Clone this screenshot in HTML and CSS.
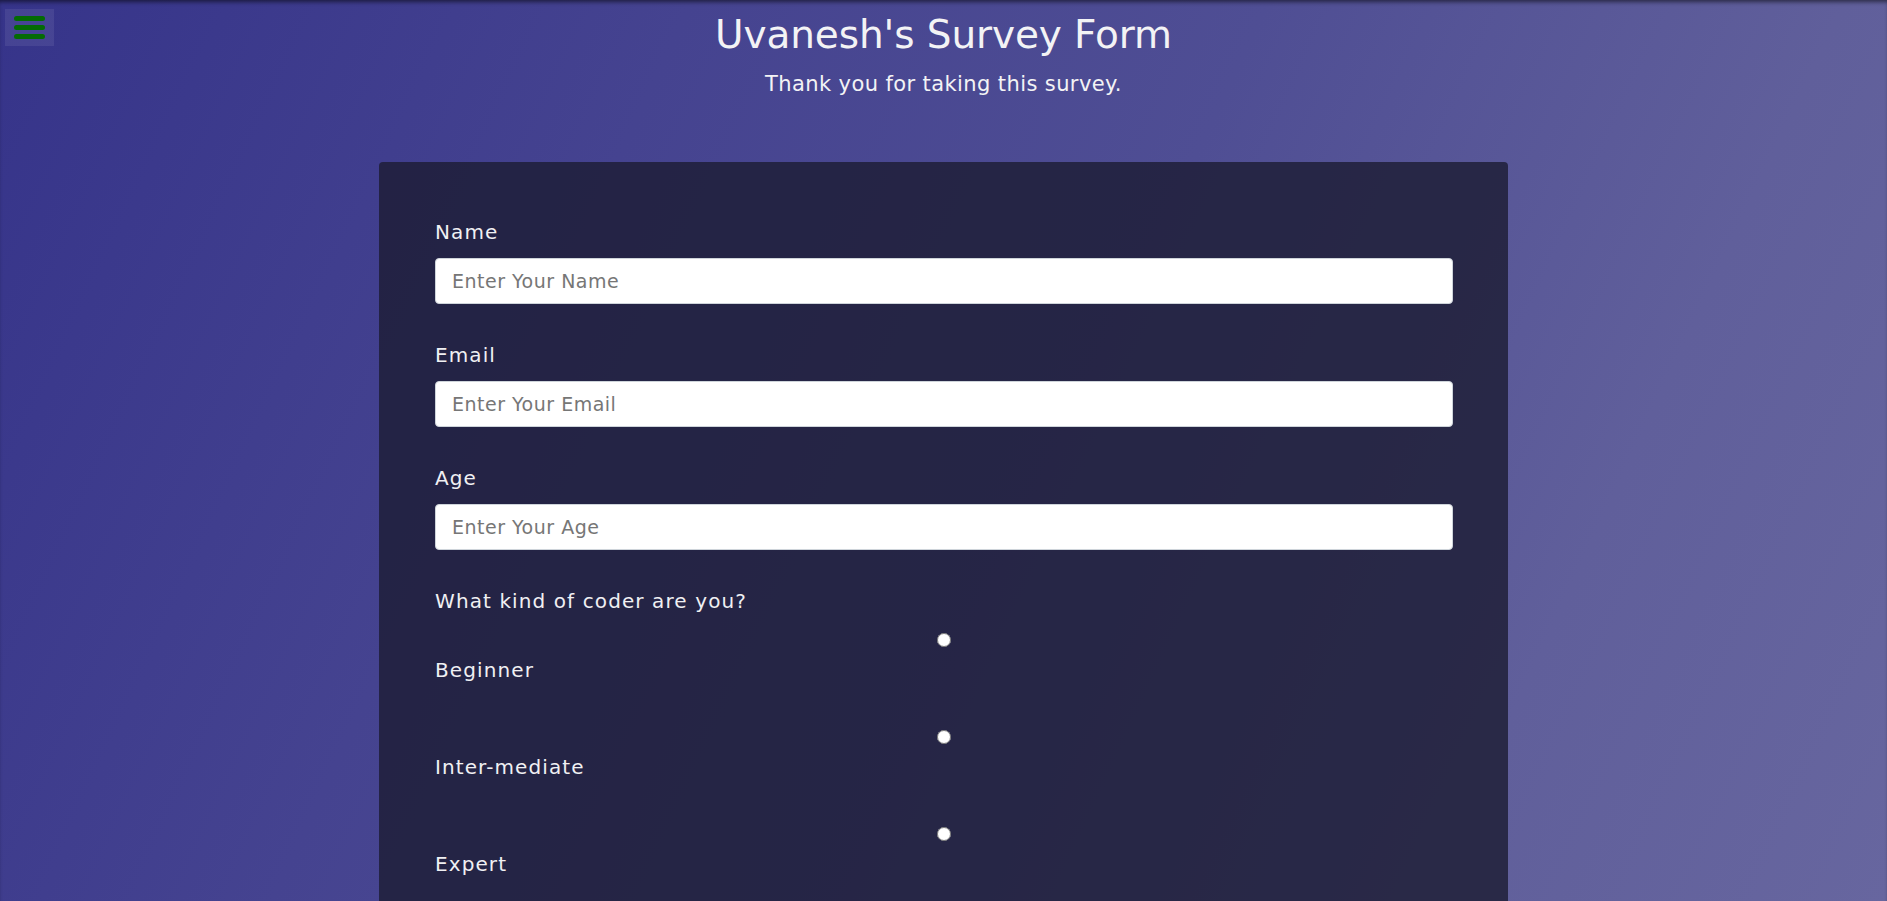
FILE: index.html
```html
<!DOCTYPE html>
<html lang="en">
<head>
<meta charset="utf-8">
<title>Uvanesh's Survey Form</title>
<link rel="stylesheet" href="styles.css">
</head>
<body>
  <button class="menu-btn" aria-label="Menu">
    <span class="bar"></span>
    <span class="bar"></span>
    <span class="bar"></span>
  </button>

  <header class="header">
    <h1 class="title" id="title">Uvanesh's Survey Form</h1>
    <p class="description" id="description">Thank you for taking this survey.</p>
  </header>

  <main class="container">
    <form class="survey-form" id="survey-form">
      <div class="form-group">
        <label class="field-label" for="name">Name</label>
        <input class="text-input" type="text" id="name" placeholder="Enter Your Name">
      </div>
      <div class="form-group">
        <label class="field-label" for="email">Email</label>
        <input class="text-input" type="email" id="email" placeholder="Enter Your Email">
      </div>
      <div class="form-group">
        <label class="field-label" for="age">Age</label>
        <input class="text-input" type="number" id="age" placeholder="Enter Your Age">
      </div>
      <div class="form-group">
        <p class="field-label">What kind of coder are you?</p>
        <div class="choice">
          <input class="radio" type="radio" name="level" id="beginner" value="beginner">
          <label class="field-label" for="beginner">Beginner</label>
        </div>
        <div class="choice">
          <input class="radio" type="radio" name="level" id="intermediate" value="intermediate">
          <label class="field-label" for="intermediate">Inter-mediate</label>
        </div>
        <div class="choice">
          <input class="radio" type="radio" name="level" id="expert" value="expert">
          <label class="field-label" for="expert">Expert</label>
        </div>
      </div>
      <div class="form-group">
        <label class="field-label" for="comments">Any comments or suggestions?</label>
        <textarea class="text-input textarea" id="comments" placeholder="Enter your comment here..."></textarea>
      </div>
      <div class="form-group">
        <button class="submit-btn" type="submit">Submit</button>
      </div>
    </form>
  </main>
</body>
</html>
```

FILE: styles.css
```css
* {
  box-sizing: border-box;
}

html {
  background: #37358a;
}

body {
  margin: 0;
  min-height: 100vh;
  font-family: "DejaVu Sans", "Open Sans", sans-serif;
  color: #f3f3f5;
  background: linear-gradient(115deg, #36348a 0%, #454390 30%, #4f4e94 55%, #605f9b 80%, #67669f 100%);
  background-attachment: fixed;
  box-shadow: inset 0 4px 4px -2px rgba(0, 0, 0, 0.55);
  padding-bottom: 60px;
}

.menu-btn {
  position: absolute;
  top: 9px;
  left: 5px;
  width: 49px;
  height: 37px;
  padding: 7px 9px;
  border: 0;
  background: rgba(255, 255, 255, 0.08);
  display: flex;
  flex-direction: column;
  justify-content: space-between;
  cursor: pointer;
}

.bar {
  display: block;
  height: 5px;
  width: 100%;
  border-radius: 3px;
  background: #046b04;
}

.header {
  text-align: center;
  padding-top: 11px;
}

.title {
  margin: 0;
  font-size: 39px;
  line-height: 48px;
  font-weight: 400;
  letter-spacing: -0.1px;
}

.description {
  margin: 10px 0 0;
  font-size: 21px;
  line-height: 30px;
  font-weight: 400;
  letter-spacing: 0.4px;
}

.container {
  width: 1129px;
  margin: 63px auto 0;
  padding: 55px 55px 55px 56px;
  background: rgba(27, 27, 50, 0.8);
  border-radius: 4px;
}

.form-group {
  margin-bottom: 36px;
}

.field-label {
  display: block;
  margin: 0;
  font-size: 20px;
  line-height: 30px;
  font-weight: 400;
  letter-spacing: 1.1px;
  color: #f0f0f3;
}

.text-input {
  display: block;
  width: 100%;
  height: 46px;
  margin-top: 11px;
  padding: 0 16px;
  font-family: inherit;
  font-size: 19px;
  letter-spacing: 0.5px;
  color: #495057;
  background: #fff;
  border: 1px solid #ced4da;
  border-radius: 4px;
}

.text-input::placeholder {
  color: #767676;
}

.textarea {
  height: 120px;
  padding-top: 10px;
  resize: vertical;
}

.choice {
  display: flex;
  flex-direction: column;
}

.radio {
  display: block;
  width: 14px;
  height: 14px;
  margin: 17px auto 8px;
}

.choice .field-label {
  margin-bottom: 28px;
}

.choice:last-child .field-label {
  margin-bottom: 0;
}

.submit-btn {
  display: block;
  width: 100%;
  height: 46px;
  font-family: inherit;
  font-size: 18px;
  color: #fff;
  background: #37af65;
  border: 0;
  border-radius: 2px;
}
```
